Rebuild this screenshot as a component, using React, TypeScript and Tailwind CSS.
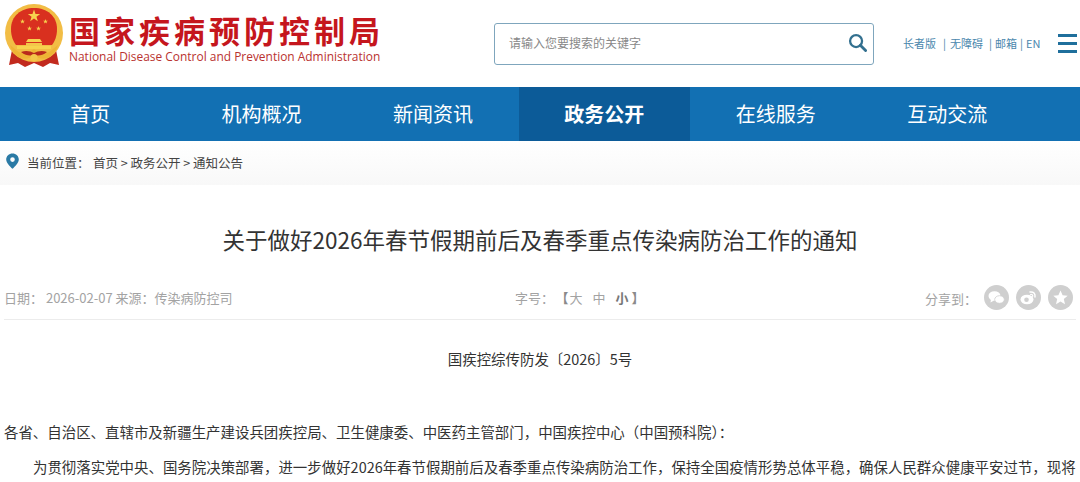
const CJK = "font-['Noto_Sans_CJK_SC','Noto_Sans',sans-serif]";

const NAV_ITEMS = ['首页', '机构概况', '新闻资讯', '政务公开', '在线服务', '互动交流'];

function starPoints(cx: number, cy: number, r: number) {
  const pts: string[] = [];
  for (let i = 0; i < 10; i++) {
    const rad = i % 2 === 0 ? r : r * 0.4;
    const a = (Math.PI / 5) * i - Math.PI / 2;
    pts.push(`${(cx + rad * Math.cos(a)).toFixed(2)},${(cy + rad * Math.sin(a)).toFixed(2)}`);
  }
  return pts.join(' ');
}

function Emblem() {
  return (
    <svg width="60" height="65" viewBox="0 0 60 65" className="shrink-0">
      <path d="M8 47 L5 62 L14 60 L21 64 L30 60 L39 64 L46 60 L55 62 L52 47 Z" fill="#c22a1e" />
      <circle cx="30" cy="30" r="29" fill="#f2bd45" />
      <path d="M7 26 C7 13 17 5 30 5 C43 5 53 13 53 26 C53 33 51 38 48 42 H12 C9 38 7 33 7 26 Z" fill="#d9301f" />
      <polygon points={starPoints(30, 13, 6.5)} fill="#f7d24e" />
      <polygon points={starPoints(18.5, 18.5, 2.6)} fill="#f7d24e" />
      <polygon points={starPoints(41.5, 18.5, 2.6)} fill="#f7d24e" />
      <polygon points={starPoints(25.5, 25.5, 2.6)} fill="#f7d24e" />
      <polygon points={starPoints(34.5, 25.5, 2.6)} fill="#f7d24e" />
      <path d="M24 36 H36 L38 39 H22 Z" fill="#f7d24e" />
      <path d="M22 40 H38 V43 H22 Z" fill="#f3c74a" />
      <path d="M13 43 H47 V46 H13 Z" fill="#f7d24e" />
      <path d="M6 42 C10 56 22 59 30 52 C38 59 50 56 54 42 L49 46 C44 52 36 51 30 46 C24 51 16 52 11 46 Z" fill="#eeb435" />
      <path d="M17 49 C22 47 26 48 30 50 C34 48 38 47 43 49 C38 53 34 53 30 52 C26 53 22 53 17 49 Z" fill="#b92a1c" />
      <circle cx="30" cy="54.500" r="3.500" fill="#f3c74a" />
    </svg>
  );
}

function SearchIcon() {
  return (
    <svg width="19" height="19" viewBox="0 0 20 20" fill="none" stroke="#33708f" strokeWidth="2.400">
      <circle cx="8.500" cy="8.500" r="6.300" />
      <path d="M13 13 L18.500 18.500" strokeLinecap="round" strokeWidth="3" />
    </svg>
  );
}

function PinIcon() {
  return (
    <svg width="13" height="16" viewBox="0 0 13 16">
      <path
        fillRule="evenodd"
        d="M6.500 0.500 C10 0.500 12.800 3.100 12.800 6.500 C12.800 10 9 13.500 6.500 15.800 C4 13.500 0.200 10 0.200 6.500 C0.200 3.100 3 0.500 6.500 0.500 Z M6.500 4.300 A2.300 2.300 0 1 0 6.500 8.900 A2.300 2.300 0 1 0 6.500 4.300 Z"
        fill="#2a7aa5"
      />
    </svg>
  );
}

function ShareIcon({ kind }: { kind: 'wechat' | 'weibo' | 'star' }) {
  return (
    <svg width="25" height="25" viewBox="0 0 25 25">
      <circle cx="12.500" cy="12.500" r="12.500" fill="#cfcfcf" />
      {kind === 'wechat' && (
        <>
          <ellipse cx="10.500" cy="11" rx="6" ry="4.800" fill="#fff" />
          <path d="M7 14 L6.500 17.500 L10 15.500 Z" fill="#fff" />
          <ellipse cx="15.500" cy="14.500" rx="4.800" ry="3.800" fill="#fff" stroke="#cfcfcf" strokeWidth="0.800" />
        </>
      )}
      {kind === 'weibo' && (
        <>
          <ellipse cx="11" cy="14.500" rx="6.500" ry="4.800" fill="#fff" />
          <circle cx="10.500" cy="14.800" r="2.300" fill="#cfcfcf" />
          <path d="M14 7 C17.500 6.500 19.500 8.500 19 12" fill="none" stroke="#fff" strokeWidth="1.500" strokeLinecap="round" />
          <path d="M14.500 9.500 C16 9.200 17 10 16.700 11.500" fill="none" stroke="#fff" strokeWidth="1.200" strokeLinecap="round" />
        </>
      )}
      {kind === 'star' && (
        <path d="M12.500 5.500 L14.600 10.200 L19.700 10.700 L15.800 14.100 L17 19.200 L12.500 16.500 L8 19.200 L9.200 14.100 L5.300 10.700 L10.400 10.200 Z" fill="#fff" />
      )}
    </svg>
  );
}

export default function App() {
  return (
    <div className={`h-[482px] w-[1080px] overflow-hidden bg-white ${CJK}`}>
      <header className="flex h-[87px] items-start">
        <div className="ml-[4px] mt-[3px]">
          <Emblem />
        </div>
        <div className="ml-[5px] mt-[13px] w-[320px]">
          <div className="whitespace-nowrap text-[31px] font-bold leading-[34px] tracking-[4px] text-[#c5161d]">国家疾病预防控制局</div>
          <div className="mt-[2px] whitespace-nowrap font-['Open_Sans',sans-serif] text-[11.950px] font-medium leading-[16px] text-[#b9322f]">
            National Disease Control and Prevention Administration
          </div>
        </div>
        <div className="ml-[105px] mt-[23px] flex h-[42px] w-[380px] items-center justify-between rounded-[3px] border border-[#7fa6bd] pb-[3px] pl-[14px] pr-[6px]">
          <span className="text-[12px] text-[#888888]">请输入您要搜索的关键字</span>
          <SearchIcon />
        </div>
        <div className="ml-[29px] mt-[35px] flex items-center whitespace-nowrap text-[11px] leading-[16px] text-[#4a87ad]">
          <span>长者版</span>
          <span className="ml-[7px]">|</span>
          <span className="ml-[4px]">无障碍</span>
          <span className="ml-[6px]">|</span>
          <span className="ml-[3px]">邮箱</span>
          <span className="ml-[3px]">|</span>
          <span className="ml-[3px]">EN</span>
        </div>
        <div className="ml-[18px] mt-[34px] flex w-[19px] flex-col gap-[5px]">
          <span className="h-[3px] bg-[#1f6f9c]" />
          <span className="h-[3px] bg-[#1f6f9c]" />
          <span className="h-[3px] bg-[#1f6f9c]" />
        </div>
      </header>

      <nav className="grid h-[54px] grid-cols-[repeat(6,171.4px)] bg-[#1270b3] pl-[4.500px] text-[20px] text-white">
        {NAV_ITEMS.map((item) => (
          <div key={item} className={item === '政务公开' ? 'flex items-center justify-center bg-[#0c5b98] font-bold' : 'flex items-center justify-center'}>
            {item}
          </div>
        ))}
      </nav>

      <div className="flex h-[44px] items-start bg-gradient-to-b from-white to-[#f8f8f8] pl-[6px] text-[12.500px] text-[#444444]">
        <div className="mt-[12px]">
          <PinIcon />
        </div>
        <span className="ml-[8px] mt-[13px] leading-[17px]">当前位置：</span>
        <span className="ml-[3.500px] mt-[13px] leading-[17px]">首页 &gt; 政务公开 &gt; 通知公告</span>
      </div>

      <main className="px-[4px]">
        <h1 className="mt-[38px] text-center text-[22.500px] font-normal leading-[32px] text-[#333333]">
          关于做好2026年春节假期前后及春季重点传染病防治工作的通知
        </h1>

        <div className="mt-[28px] flex h-[37px] items-start border-b border-[#ececec] pt-[2px] text-[13px] leading-[22px] text-[#a3a3a3]">
          <div className="w-[511px] whitespace-nowrap pt-[2px]">
            日期： 2026-02-07 来源：传染病防控司
          </div>
          <div className="whitespace-nowrap pt-[2px]">
            字号：<span className="ml-[8px] font-bold text-[#8a8a8a]">【</span>
            <span className="ml-[1px]">大</span>
            <span className="ml-[10px]">中</span>
            <span className="ml-[10px] font-bold text-[#777777]">小</span>
            <span className="ml-[3px] font-bold text-[#8a8a8a]">】</span>
          </div>
          <div className="flex flex-1 items-center justify-end gap-[7px] pr-[3px]">
            <span className="pt-[2px]">分享到：</span>
            <ShareIcon kind="wechat" />
            <ShareIcon kind="weibo" />
            <ShareIcon kind="star" />
          </div>
        </div>

        <div className="text-[14.450px] leading-[28px] text-[#333333]">
          <p className="mt-[25px] text-center">国疾控综传防发〔2026〕5号</p>
          <p className="mt-[45px] whitespace-nowrap">各省、自治区、直辖市及新疆生产建设兵团疾控局、卫生健康委、中医药主管部门，中国疾控中心（中国预科院）：</p>
          <p className="mt-[7px] whitespace-nowrap indent-[29px]">
            为贯彻落实党中央、国务院决策部署，进一步做好2026年春节假期前后及春季重点传染病防治工作，保持全国疫情形势总体平稳，确保人民群众健康平安过节，现将
          </p>
        </div>
      </main>
    </div>
  );
}
